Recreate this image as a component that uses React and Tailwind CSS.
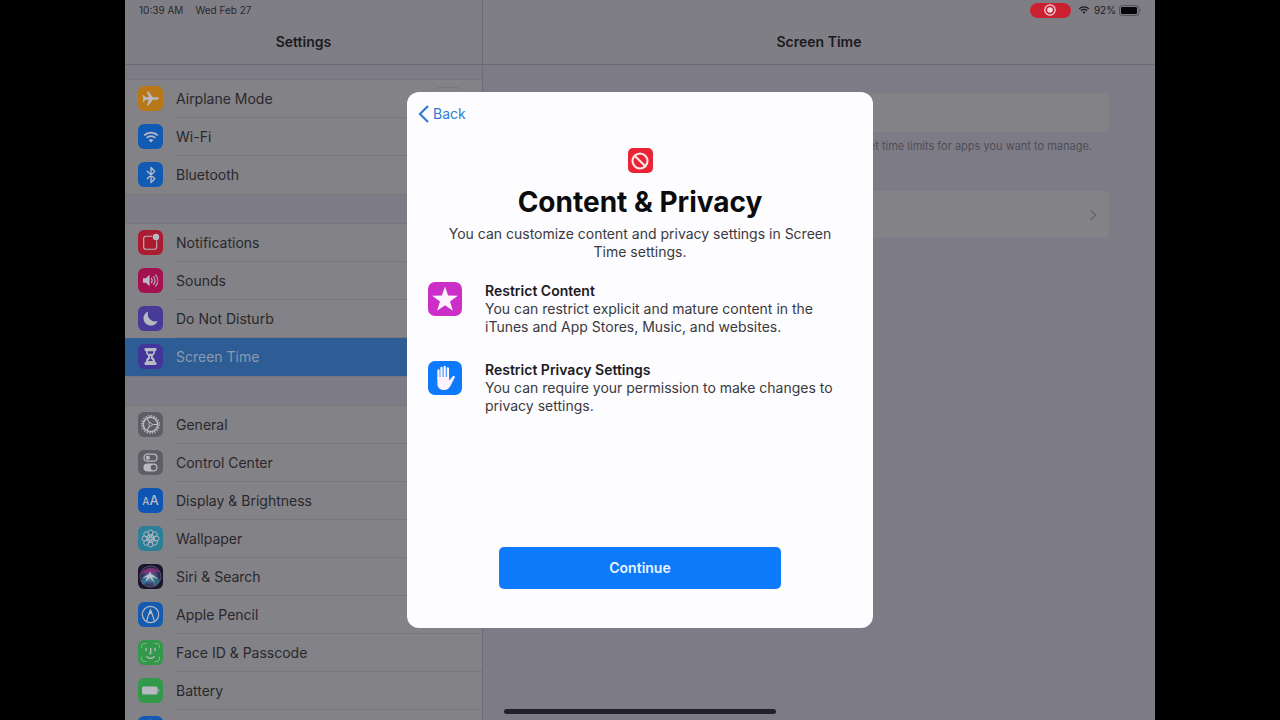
import React from "react";
import { Ban, Bluetooth } from "lucide-react";

const PlaneIcon = () => (
  <svg viewBox="0 0 25 25" className="size-full" fill="currentColor">
    <path d="M20.800 12.500c0 .8-1 1.200-2.200 1.200h-3.900l-4.200 5.800H8.900l2-5.800H7.400l-1.700 2H4.500l.9-3.200-.9-3.200h1.200l1.700 2h3.500l-2-5.800h1.600l4.200 5.800h3.900c1.200 0 2.200.4 2.200 1.200Z" />
  </svg>
);

const WifiIcon = () => (
  <svg viewBox="4 5 17 15" className="size-full" fill="none" stroke="currentColor">
    <path d="M5.200 10.800a10.400 10.400 0 0 1 14.600 0M7.900 13.500a6.600 6.600 0 0 1 9.200 0" strokeWidth="2" />
    <path d="m12.500 18.300 2.400-2.400a3.400 3.400 0 0 0-4.800 0Z" fill="currentColor" stroke="none" />
  </svg>
);

const SoundIcon = () => (
  <svg viewBox="0 0 25 25" className="size-full" fill="none" stroke="currentColor">
    <path d="M5 10.200h2.800l3.800-3.400v11.400l-3.800-3.400H5Z" fill="currentColor" stroke="none" />
    <path
      d="M13.400 10.200c1 1.400 1 3.200 0 4.600M15.500 8.500c1.900 2.400 1.900 5.600 0 8M17.700 6.800c2.800 3.400 2.800 8 0 11.400"
      strokeWidth="1.100"
      strokeLinecap="round"
    />
  </svg>
);

const HourglassIcon = () => (
  <svg viewBox="0 0 25 25" className="size-full" fill="currentColor">
    <rect x="6.500" y="4" width="12" height="3" rx="1" />
    <rect x="6.500" y="18" width="12" height="3" rx="1" />
    <path d="M8 6h9v2.500c0 2-2.300 2.600-2.300 4s2.300 2 2.300 4V19H8v-2.500c0-2 2.300-2.600 2.300-4S8 10.500 8 8.500Z" />
    <path d="M9.700 7.200h5.600v1.300c0 .5-.3.900-.7 1.200h-4.200c-.4-.3-.7-.7-.7-1.200ZM12.100 12h.8v2.500l2.200 2.600H9.900l2.200-2.600Z" fill="#41369a" />
  </svg>
);

const GearIcon = () => (
  <svg viewBox="0 0 25 25" className="size-full" fill="none" stroke="currentColor">
    <circle cx="12.5" cy="12.5" r="7.200" strokeWidth="1.500" />
    <circle cx="12.5" cy="12.5" r="8.700" strokeWidth="1.500" strokeDasharray="1.400 1.330" />
    <circle cx="12.5" cy="12.5" r="1.600" strokeWidth="1" />
    <path d="M14.200 12.500h5M11.600 11 9 6.400M11.600 14 9 18.600" strokeWidth="1.100" />
  </svg>
);

const ControlIcon = () => (
  <svg viewBox="0 0 25 25" className="size-full" fill="none" stroke="currentColor">
    <rect x="6" y="4.200" width="13" height="7" rx="3.500" strokeWidth="1.200" />
    <rect x="7.800" y="5.700" width="4" height="4" rx="1.600" fill="currentColor" stroke="none" />
    <rect x="5.500" y="13.500" width="14" height="8" rx="4" fill="currentColor" stroke="none" />
    <circle cx="15.500" cy="17.500" r="2.800" fill="#5f5d66" stroke="none" />
  </svg>
);

const FlowerIcon = () => (
  <svg viewBox="0 0 25 25" className="size-full" fill="none" stroke="currentColor" strokeWidth="0.900">
    {[0, 45, 90, 135, 180, 225, 270, 315].map((deg) => (
      <g key={deg} transform={`rotate(${deg} 12.5 12.5)`}>
        <circle cx="12.5" cy="6.500" r="2.500" />
        <circle cx="12.5" cy="10" r="1.200" />
      </g>
    ))}
  </svg>
);

const SiriIcon = () => (
  <svg viewBox="0 0 25 25" className="size-full">
    <defs>
      <radialGradient id="siri" cx="50%" cy="55%" r="50%">
        <stop offset="0" stopColor="#7e9dba" />
        <stop offset="0.5" stopColor="#40527f" />
        <stop offset="1" stopColor="#1d1836" />
      </radialGradient>
    </defs>
    <circle cx="12.5" cy="12.5" r="11" fill="url(#siri)" />
    <path d="M3 10C6 3 18 1 22 9c-4-2-7 0-10 2-3-2-6-2-9-1Z" fill="#94307f" opacity="0.75" />
    <path d="M3 16c3-3 6-3 9-4-1 4-4 7-6 9-2-1-3-3-3-5Z" fill="#2c7aa0" opacity="0.8" />
    <path d="M13 11c3 1 6 3 9 5-1 3-4 6-7 6 0-4 0-7-2-11Z" fill="#2b8184" opacity="0.7" />
    <path d="M3.500 14.500 11 10l1-3 1.200 3 7.500 5-6.500-2.100L16.500 19l-4.500-5.500L7.500 18 9 13Z" fill="#b5c5cf" />
    <circle cx="12.5" cy="12.5" r="10.500" fill="none" stroke="#746591" strokeWidth="0.700" />
  </svg>
);

const PencilIcon = () => (
  <svg viewBox="0 0 25 25" className="size-full" fill="none" stroke="currentColor" strokeWidth="1.200">
    <circle cx="12.5" cy="12.5" r="8.200" />
    <path d="M8.600 19.500C9.300 15.500 10.500 12.500 12.500 8.500c2 4 3.200 7 3.900 11" />
    <path d="M11.200 11.500 12.500 8l1.300 3.500Z" fill="currentColor" />
  </svg>
);

const FaceIcon = () => (
  <svg
    viewBox="0 0 25 25"
    className="size-full"
    fill="none"
    stroke="currentColor"
    strokeWidth="1.300"
    strokeLinecap="round"
  >
    <path
      d="M3.500 8V6a2.500 2.500 0 0 1 2.500-2.500h2M17 3.500h2A2.500 2.500 0 0 1 21.500 6v2M21.500 17v2a2.500 2.500 0 0 1-2.500 2.500h-2M8 21.500H6A2.500 2.500 0 0 1 3.500 19v-2"
      strokeWidth="0.900"
      opacity="0.700"
    />
    <path d="M8 8.500v2M17 8.500v2M12.800 8.500v4.200c0 .8-.4 1.100-1.200 1.100M8.800 16.800c2 2 5.400 2 7.400 0" />
  </svg>
);

const BatteryIcon = () => (
  <svg viewBox="0 0 25 25" className="size-full" fill="currentColor">
    <rect x="4" y="8.500" width="15.500" height="8" rx="1.500" />
    <path d="M20.300 10.500c1.300.6 1.300 3.400 0 4Z" />
  </svg>
);

const NotificationIcon = () => (
  <svg viewBox="0 0 25 25" className="size-full" fill="none" stroke="currentColor">
    <path
      d="M14.500 6.300H8A2.300 2.300 0 0 0 5.700 8.600V17A2.300 2.300 0 0 0 8 19.300h8.400a2.300 2.300 0 0 0 2.300-2.300v-6.500"
      strokeWidth="1.100"
    />
    <circle cx="18" cy="7" r="3.200" fill="currentColor" stroke="none" />
  </svg>
);

const MoonIcon = () => (
  <svg viewBox="0 0 25 25" className="size-full" fill="currentColor">
    <path d="M10.200 5.500a7.300 7.300 0 1 0 9.400 9.500A7.400 7.400 0 0 1 10.200 5.500Z" />
  </svg>
);

const StarIcon = () => (
  <svg viewBox="0 0 34 34" className="size-full" fill="currentColor">
    <path d="m17 4.500 3.100 9.100 9.700.1-7.800 5.800 2.900 9.300-7.900-5.600-7.900 5.600 2.900-9.300-7.800-5.800 9.700-.1Z" />
  </svg>
);

const HandIcon = () => (
  <svg
    viewBox="0 0 34 34"
    className="size-full"
    fill="none"
    stroke="currentColor"
    strokeWidth="2.300"
    strokeLinecap="round"
  >
    <path d="M10.500 18V9.500M13.500 18V6.800M16.700 18V6M19.900 18V7.500" />
    <path
      d="M9.400 16h11.700v3.500l3.600-4c1-1 2.600-.3 2 1l-4.200 8.200c-1.300 2.700-3.300 4.300-6.500 4.300-4.300 0-6.600-2.500-6.600-6.500Z"
      fill="currentColor"
      stroke="none"
    />
  </svg>
);

const groups = [
  [
    { label: "Airplane Mode", color: "bg-[#b87817]", icon: <PlaneIcon />, toggle: true },
    { label: "Wi-Fi", color: "bg-[#115bb4]", icon: <span className="h-[14px] w-4"><WifiIcon /></span> },
    { label: "Bluetooth", color: "bg-[#115bb4]", icon: <Bluetooth className="size-[18px]" strokeWidth={1.8} /> },
  ],
  [
    { label: "Notifications", color: "bg-[#ab1c30]", icon: <NotificationIcon /> },
    { label: "Sounds", color: "bg-[#a31150]", icon: <SoundIcon /> },
    { label: "Do Not Disturb", color: "bg-[#473a99]", icon: <MoonIcon /> },
    { label: "Screen Time", color: "bg-[#41369a]", icon: <HourglassIcon />, active: true },
  ],
  [
    { label: "General", color: "bg-[#5f5d66]", icon: <GearIcon /> },
    { label: "Control Center", color: "bg-[#5f5d66]", icon: <ControlIcon /> },
    {
      label: "Display & Brightness",
      color: "bg-[#0f55b4]",
      icon: (
        <span className="flex items-baseline leading-none font-medium">
          <span className="text-[10px]">A</span>
          <span className="text-[13px] leading-none">A</span>
        </span>
      ),
    },
    { label: "Wallpaper", color: "bg-[#2b7f98]", icon: <FlowerIcon /> },
    { label: "Siri & Search", color: "bg-[#191629]", icon: <SiriIcon /> },
    { label: "Apple Pencil", color: "bg-[#155cb0]", icon: <PencilIcon /> },
    { label: "Face ID & Passcode", color: "bg-[#32994a]", icon: <FaceIcon /> },
    { label: "Battery", color: "bg-[#32994a]", icon: <BatteryIcon /> },
    { label: "", name: "Privacy", color: "bg-[#115bb4]", icon: <HandIcon /> },
  ],
];

const features = [
  {
    title: "Restrict Content",
    text: "You can restrict explicit and mature content in the iTunes and App Stores, Music, and websites.",
    color: "bg-[#cb2fc8]",
    icon: <StarIcon />,
  },
  {
    title: "Restrict Privacy Settings",
    text: "You can require your permission to make changes to privacy settings.",
    color: "bg-[#0d7afc]",
    icon: <HandIcon />,
  },
];

const Row = ({ item, last }) => (
  <li>
    <a
      href="#"
      aria-label={item.name}
      className={`flex h-[38px] items-center gap-[13px] pl-[13px] ${
        item.active ? "bg-[#2e5c94] text-[#8b9bb1]" : "text-[#29282d]"
      }`}
    >
      <span
        className={`mb-px flex size-[25px] shrink-0 items-center justify-center overflow-hidden rounded-md text-[#b9b9c2] ${item.color}`}
      >
        {item.icon}
      </span>
      <span
        className={`flex h-full flex-1 items-center justify-between border-b pt-px pr-[14px] ${
          last || item.active ? "border-transparent" : "border-[#78767d]"
        }`}
      >
        {item.label}
        {item.toggle && <span className="h-6 w-10 rounded-full border border-[#77757d]" />}
      </span>
    </a>
  </li>
);

const Sidebar = () => (
  <aside className="flex w-[358px] shrink-0 flex-col overflow-hidden border-r border-[#6d6b74]">
    <header className="h-[65px] shrink-0 border-b border-[#6b6972] bg-[#807e85]">
      <div className="flex h-5 items-center gap-3 pl-[14px] text-[10px] text-[#29282d]">
        <span>10:39 AM</span>
        <span>Wed Feb 27</span>
      </div>
      <h1 className="text-center text-sm leading-[44px] font-semibold text-[#1b1a1e]">Settings</h1>
    </header>
    <nav className="flex flex-col gap-[30px] pt-[15px] text-sm">
      {groups.map((group, i) => (
        <ul key={i} className="bg-[#838286] outline outline-[#77757d]">
          {group.map((item, j) => (
            <Row key={item.label} item={item} last={j === group.length - 1} />
          ))}
        </ul>
      ))}
    </nav>
  </aside>
);

const Detail = () => (
  <main className="min-w-0 flex-1">
    <header className="h-[65px] border-b border-[#6b6972] bg-[#807e85]">
      <div className="flex h-5 items-center justify-end pr-[13px] text-[10px] text-[#1b1a1e]">
        <span className="mr-[7px] flex h-[15px] w-[41px] items-center justify-center rounded-full bg-[#cb2032]">
          <svg viewBox="0 0 12 12" className="size-3">
            <circle cx="6" cy="6" r="5.200" fill="none" stroke="#f4dfe2" strokeWidth="1.200" />
            <circle cx="6" cy="6" r="2.800" fill="#f4dfe2" />
          </svg>
        </span>
        <span className="mr-1 h-[10px] w-3">
          <WifiIcon />
        </span>
        <span className="mr-[3px]">92%</span>
        <svg viewBox="0 0 23 11" className="h-[11px] w-[23px]">
          <rect x="0.500" y="0.500" width="19.500" height="10" rx="2.500" fill="none" stroke="#55545a" />
          <rect x="2" y="2" width="16" height="7" rx="1" fill="#050506" />
          <path d="M21.200 4v3.200c1-.4 1-2.800 0-3.200Z" fill="#55545a" />
        </svg>
      </div>
      <h2 className="text-center text-sm leading-[44px] font-semibold text-[#1b1a1e]">Screen Time</h2>
    </header>
    <section className="px-[46px] pt-[29px]">
      <div className="h-[38px] rounded bg-[#838286]" />
      <p className="truncate pt-[5px] pr-[17px] text-right text-[11px] leading-[18px] text-[#4f4e56]">
        Get a weekly report about your screen time and set time limits for apps you want to manage.
      </p>
      <button
        aria-label="Open"
        className="mt-9 flex h-[47px] w-full items-center justify-end rounded bg-[#838286] pr-3"
      >
        <svg viewBox="0 0 8 12" className="h-3 w-2" fill="none" stroke="#66656b" strokeWidth="1.300">
          <path d="m1.500 1 5 5-5 5" />
        </svg>
      </button>
    </section>
  </main>
);

const ContentPrivacyDialog = () => (
  <div
    role="dialog"
    aria-labelledby="dialog-title"
    className="flex min-h-[536px] w-full max-w-[466px] flex-col rounded-xl bg-[#fdfcff] text-[#3a3a3e]"
  >
    <button className="flex h-11 items-center gap-1 self-start pl-[11px] text-sm text-[#2e7cd6]">
      <svg viewBox="0 0 11 18" className="h-[18px] w-[11px]" fill="none" stroke="currentColor" strokeWidth="2.200">
        <path d="M10 1 2 9l8 8" />
      </svg>
      Back
    </button>
    <div className="flex flex-col items-center px-10 pt-3 text-center">
      <span className="flex size-[25px] items-center justify-center rounded-[5px] bg-[#ea2432] text-[#fbe9ee]">
        <Ban className="size-[18px]" strokeWidth={2.8} />
      </span>
      <h2 id="dialog-title" className="pt-[9px] text-[28px] leading-10 font-bold text-[#0c0c0e]">
        Content & Privacy
      </h2>
      <p className="pt-[3px] text-sm leading-[18px]">
        You can customize content and privacy settings in Screen Time settings.
      </p>
    </div>
    <ul className="flex flex-col gap-[25px] pt-[21px] pr-9 pl-[21px]">
      {features.map((feature) => (
        <li key={feature.title} className="flex gap-[23px]">
          <span
            className={`flex size-[34px] shrink-0 items-center justify-center rounded-[7px] text-[#fdf3fe] ${feature.color}`}
          >
            {feature.icon}
          </span>
          <div className="text-sm leading-[18px]">
            <h3 className="font-semibold text-[#1b1a1e]">{feature.title}</h3>
            <p>{feature.text}</p>
          </div>
        </li>
      ))}
    </ul>
    <button className="mx-auto mt-auto mb-[39px] h-[42px] w-[282px] rounded-[5px] bg-[#0d7afc] text-sm font-semibold text-[#e8f3ff]">
      Continue
    </button>
  </div>
);

const App = () => {
  return (
    <div className="h-screen bg-black px-[125px] font-['Inter','Liberation_Sans',sans-serif]">
      <div className="relative flex h-full overflow-hidden bg-[#7d7b85]">
        <Sidebar />
        <Detail />
        {/* Dialog over both panes */}
        <div className="absolute inset-0 flex items-center justify-center">
          <ContentPrivacyDialog />
        </div>
        {/* Home indicator */}
        <div className="absolute inset-x-0 bottom-[6px] mx-auto h-[5px] w-[272px] rounded-full bg-[#222129]" />
      </div>
    </div>
  );
};

export default App;
